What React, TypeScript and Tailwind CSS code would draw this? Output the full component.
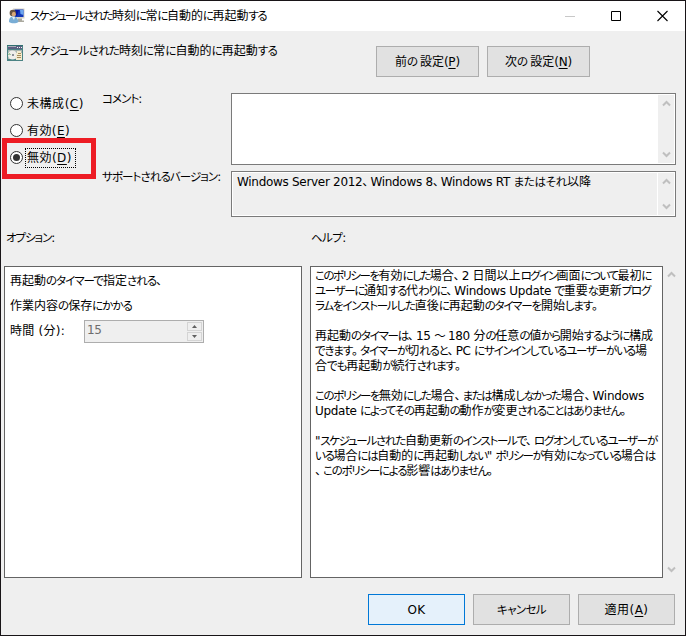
import React, { useLayoutEffect, useRef } from 'react';
import clsx from 'clsx';

// Splits a label into kana, kanji, punctuation and latin runs. "&" marks the accelerator key.
const splitRuns = (text: string) =>
  text.match(/&.|[、。]|[\u3003-\u30ff\uff5e]+|[\u4e00-\u9fff]+|[^&\u3001-\u30ff\u4e00-\u9fff\uff5e]+/g) || [];

const isKana = (run: string) => /^[\u3003-\u30ff\uff5e]/.test(run);
const isKanji = (run: string) => /^[\u4e00-\u9fff]/.test(run);
const isPunctuation = (run: string) => run === '、' || run === '。';

interface LabelProps {
  text: string;
  width: number;
  className?: string;
}

// Label with proportional kana, tightened so that the run fills the given width
const Label: React.FC<LabelProps> = ({ text, width, className }) => {
  const ref = useRef<HTMLSpanElement>(null);

  useLayoutEffect(() => {
    const el = ref.current;
    if (!el) return;
    const all = Array.from(el.children) as HTMLElement[];
    const kana = all.filter((s) => s.dataset.kana);
    const targets = kana.length ? kana : all;
    targets.forEach((s) => (s.style.letterSpacing = '0px'));
    const count = targets.reduce((n, s) => n + (s.textContent || '').length, 0);
    const spacing = (width - el.getBoundingClientRect().width) / count;
    targets.forEach((s) => (s.style.letterSpacing = `${spacing}px`));
  }, [text, width]);

  return (
    <span ref={ref} className={clsx('inline-block whitespace-pre [font-feature-settings:"palt"]', className)}>
      {splitRuns(text).map((run, i) => {
        if (run.startsWith('&')) {
          return <span key={i} className="underline underline-offset-2">{run.slice(1)}</span>;
        }
        if (isKana(run)) {
          return <span key={i} data-kana="1" className="text-[11.5px]">{run}</span>;
        }
        if (isPunctuation(run)) {
          return <span key={i} className="pr-0.5">{run}</span>;
        }
        return <span key={i} className={isKanji(run) ? undefined : 'tracking-[-0.3px]'}>{run}</span>;
      })}
    </span>
  );
};

const HELP_LINES: { text: string; width: number }[] = [
  { text: 'このポリシーを有効にした場合、2 日間以上ログイン画面について最初に', width: 336 },
  { text: 'ユーザーに通知する代わりに、Windows Update で重要な更新プログ', width: 335 },
  { text: 'ラムをインストールした直後に再起動のタイマーを開始します。', width: 285 },
  { text: '', width: 0 },
  { text: '再起動のタイマーは、15 ～ 180 分の任意の値から開始するように構成', width: 338 },
  { text: 'できます。タイマーが切れると、PC にサインインしているユーザーがいる場', width: 332 },
  { text: '合でも再起動が続行されます。', width: 148 },
  { text: '', width: 0 },
  { text: 'このポリシーを無効にした場合、または構成しなかった場合、Windows', width: 329 },
  { text: 'Update によってその再起動の動作が変更されることはありません。', width: 313 },
  { text: '', width: 0 },
  { text: '"スケジュールされた自動更新のインストールで、ログオンしているユーザーが', width: 342 },
  { text: 'いる場合には自動的に再起動しない" ポリシーが有効になっている場合は', width: 340 },
  { text: '、このポリシーによる影響はありません。', width: 180 },
];

const UserMonitorIcon = () => (
  <svg width="16" height="16" viewBox="0 0 16 16">
    <path d="M4 0.5h11.5v10H5z" fill="#d5d2c8" />
    <path d="M5.5 1.5h9v7.5h-9z" fill="#1238b8" />
    <path d="M6 2h4l-2 6H6z" fill="#0718a0" />
    <path d="M11 2h3.500v5l-3-1z" fill="#6da6ef" />
    <path d="M9 10.5h4v2h2v1.500H8z" fill="#aaa99f" />
    <circle cx="3.800" cy="5" r="3.200" fill="#665342" />
    <ellipse cx="4.800" cy="6.200" rx="2" ry="2.500" fill="#d9a878" />
    <path d="M0 14c0-4 1.500-5.500 4-5.500S9 10 9.500 14c-2 1.700-7.500 1.700-9.500 0z" fill="#79add5" />
    <path d="M3 9l2 3 1-3z" fill="#e4f2fa" />
  </svg>
);

const SettingIcon = () => (
  <svg width="16" height="16" viewBox="0 0 16 16" shapeRendering="crispEdges">
    <path d="M0 0h16v16H0z" fill="#4b8384" />
    <path d="M0 0h16v1H0z" fill="#2f6f70" />
    <path d="M1 1h14v3H1z" fill="#5a5f82" />
    <path d="M1 1h8v1H1z" fill="#a9adb8" />
    <path d="M10 2h1v1h-1zM12 2h1v1h-1zM14 2h1v1h-1z" fill="#f4f4f4" />
    <path d="M1 5h14v9H1z" fill="#a9b5b0" />
    <circle cx="5.500" cy="10" r="4.500" fill="#efeeea" shapeRendering="auto" />
    <path d="M5 10l-3-2.500-1 3z" fill="#a6cba0" />
    <path d="M5 9h2v2H5z" fill="#8c9198" />
    <path d="M10 6h4v2h1v7H9V8h1z" fill="#f3ebce" />
    <path d="M11 8h3v1h-3zM10 10h4v1h-4zM10 12h4v1h-4z" fill="#a58b5c" />
  </svg>
);

const Chevron: React.FC<{ down?: boolean }> = ({ down }) => (
  <svg width="9" height="7" viewBox="0 0 9 7" className={down ? 'rotate-180' : ''}>
    <path d="M1 5.500l3.500-3.500L8 5.500" fill="none" stroke="#bfbfbf" strokeWidth="2" />
  </svg>
);

const ScrollBar: React.FC<{ className?: string }> = ({ className }) => (
  <div className={clsx('flex flex-col items-center justify-between bg-[#efefef]', className)}>
    <Chevron />
    <Chevron down />
  </div>
);

const Button: React.FC<LabelProps & { primary?: boolean }> = ({ text, width, primary, className }) => (
  <button
    className={clsx(
      'flex h-[31px] items-center justify-center border pt-0.5',
      primary ? 'border-[#0078d7] bg-[#e5f1fb]' : 'border-[#adadad] bg-[#e1e1e1]',
      className
    )}
  >
    <Label text={text} width={width} />
  </button>
);

const Radio: React.FC<LabelProps & { checked?: boolean }> = ({ text, width, checked }) => (
  <label className="flex h-[27px] items-center">
    <span className="flex size-[13px] items-center justify-center rounded-full border border-[#333] bg-white">
      {checked && <span className="size-[7px] rounded-full bg-[#333]" />}
    </span>
    <span className={clsx('ml-0.5 flex h-5 items-center border border-dotted pt-0.5 pl-px', checked ? 'w-[51px] border-black' : 'border-transparent')}>
      <Label text={text} width={width} />
    </span>
  </label>
);

const App: React.FC = () => {
  return (
    <div className={'relative flex h-[636px] w-[686px] flex-col border border-[#181417] bg-[#efefef] text-[12px] leading-[15px] text-black [font-family:"DejaVu_Sans","Noto_Sans_CJK_JP",sans-serif]'}>
      {/* Title bar */}
      <div className="flex h-[30px] items-center bg-white pl-2">
        <UserMonitorIcon />
        <Label text="スケジュールされた時刻に常に自動的に再起動する" width={236} className="ml-[5px]" />
        <div className="ml-auto flex items-center pr-[17px]">
          <svg width="104" height="12" viewBox="0 0 104 12" fill="none">
            <path d="M1 6.500h10" stroke="#c8c8c8" />
            <path d="M47.500 1.500h9v9h-9z" stroke="#000" />
            <path d="M93.500 1l10 10M103.500 1l-10 10" stroke="#000" strokeWidth="1.100" />
          </svg>
        </div>
      </div>

      {/* Setting name and navigation */}
      <div className="flex h-[62px] items-start pt-[14px] pl-1.5">
        <SettingIcon />
        <Label text="スケジュールされた時刻に常に自動的に再起動する" width={247} className="-mt-px ml-[7px]" />
        <div className="mt-px ml-auto flex gap-2 pr-[95px]">
          <Button text="前の設定(&P)" width={65} className="w-[103px]" />
          <Button text="次の設定(&N)" width={67} className="w-[103px]" />
        </div>
      </div>

      {/* State, comment and supported versions */}
      <div className="flex h-[124px]">
        <div className="w-[101px] pl-[9px]">
          <div className="-mt-[3px]">
            <Radio text="未構成(&C)" width={57} />
            <Radio text="有効(&E)" width={43} />
            <Radio text="無効(&D)" width={45} checked />
          </div>
        </div>
        <div className="flex w-[129px] flex-col">
          <Label text="コメント:" width={40} className="-mt-px h-[78px] self-start" />
          <Label text="サポートされるバージョン:" width={119} className="self-start" />
        </div>
        <div className="flex w-[445px] flex-col gap-1.5">
          <div className="flex h-[72px] justify-end border border-[#7a7a7a] bg-white p-px">
            <ScrollBar className="w-4 py-[5px]" />
          </div>
          <div className="flex h-[46px] justify-between border border-[#7a7a7a] bg-white p-px">
            <div className="flex-1 bg-[#efefef] pt-0.5 pl-1">
              <Label text="Windows Server 2012、Windows 8、Windows RT またはそれ以降" width={354} />
            </div>
            <ScrollBar className="ml-px w-4 py-[5px]" />
          </div>
        </div>
      </div>

      <div className="flex h-[49px] pt-[14px] pl-[5px]">
        <div className="w-[305px]"><Label text="オプション:" width={49} /></div>
        <Label text="ヘルプ:" width={35} />
      </div>

      {/* Options and help panels */}
      <div className="flex h-[312px] pl-[3px]">
        <div className="w-[298px] border border-[#646464] bg-white pt-0.5 pl-[5px]">
          <div className="flex h-[25px] items-center"><Label text="再起動のタイマーで指定される、" width={154} /></div>
          <div className="flex h-[25px] items-center"><Label text="作業内容の保存にかかる" width={122} /></div>
          <div className="flex h-[25px] items-center">
            <div className="w-[74px]"><Label text="時間 (分):" width={55} /></div>
            <div className="flex h-[23px] w-[120px] justify-between border border-[#adadad] bg-[#efefef] p-px text-[#6d6d6d]">
              <span className="-mt-px pl-px leading-[19px] tracking-[-0.3px]">15</span>
              <div className="flex w-[15px] flex-col gap-px">
                <div className="flex flex-1 items-center justify-center border border-[#d4d4d4]">
                  <svg width="5" height="3" viewBox="0 0 5 3"><path d="M0 3L2.500 0 5 3z" fill="#606060" /></svg>
                </div>
                <div className="flex flex-1 items-center justify-center border border-[#d4d4d4]">
                  <svg width="5" height="3" viewBox="0 0 5 3"><path d="M0 0h5L2.500 3z" fill="#606060" /></svg>
                </div>
              </div>
            </div>
          </div>
        </div>
        <div className="ml-2 w-[353px] border border-[#646464] bg-white pt-0.5 pl-1">
          {HELP_LINES.map((line, i) => (
            <div key={i} className="h-[15px]">
              {line.text && <Label text={line.text} width={line.width} />}
            </div>
          ))}
        </div>
        <ScrollBar className="w-[17px] py-[5px]" />
      </div>

      {/* Dialog buttons */}
      <div className="flex justify-end gap-2 pt-4 pr-[10px]">
        <Button text="OK" width={18} primary className="w-[97px]" />
        <Button text="キャンセル" width={49} className="w-[97px]" />
        <Button text="適用(&A)" width={44} className="w-[97px]" />
      </div>

      {/* Highlight around the selected state */}
      <div className="absolute top-[137px] left-px h-[41px] w-[94px] border-[5px] border-[#ed1c24]" />
    </div>
  );
};

export default App;
